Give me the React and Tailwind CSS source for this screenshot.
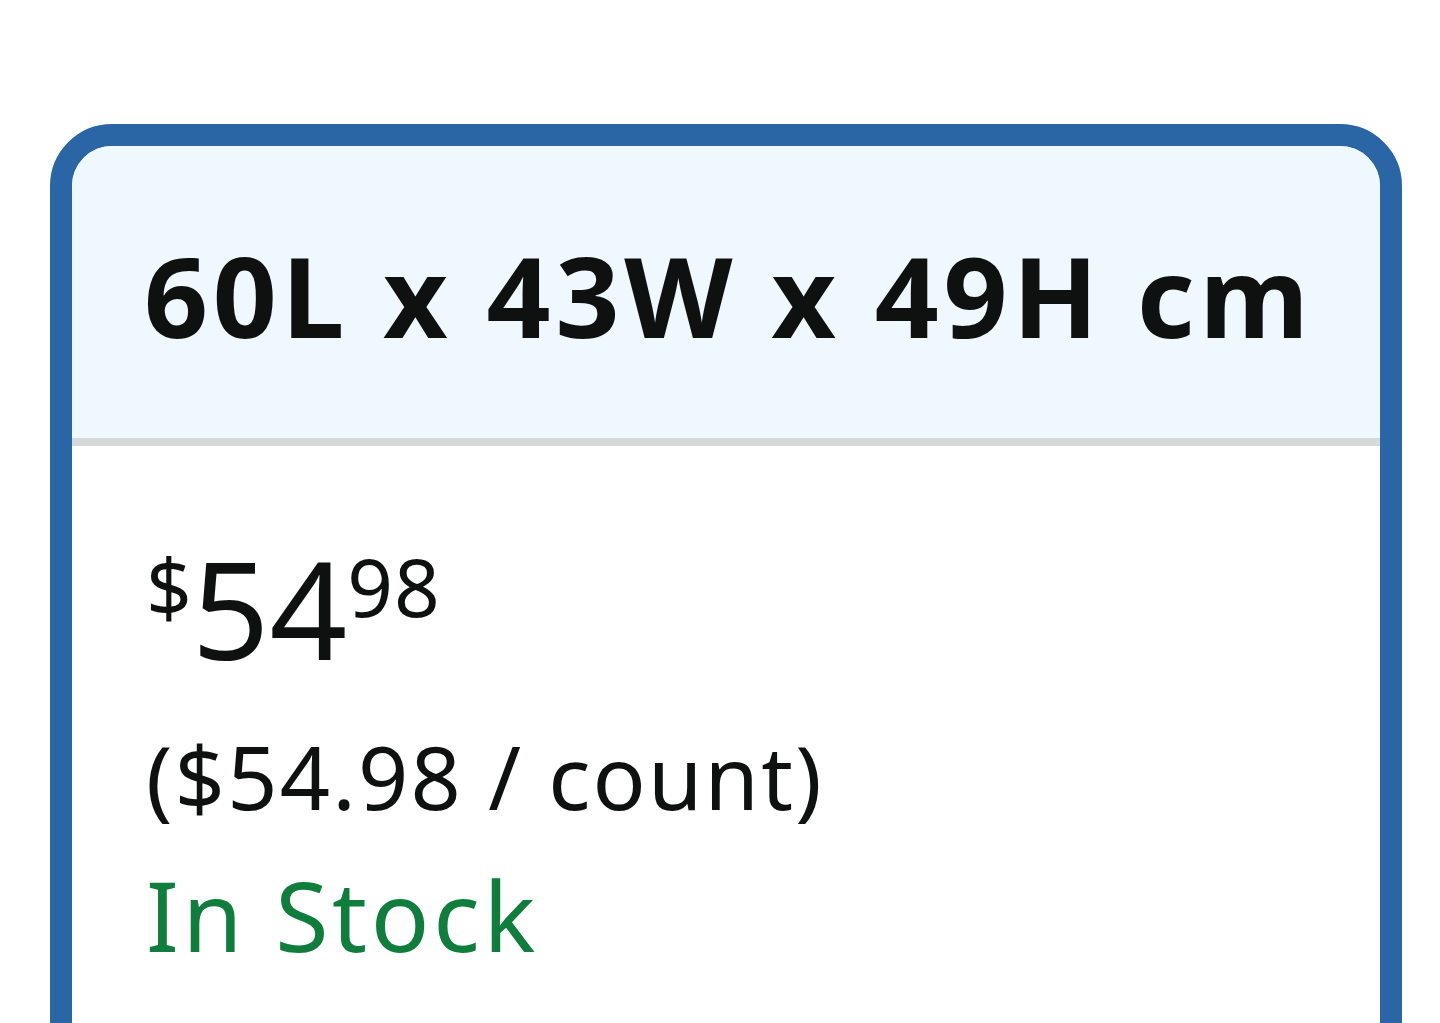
export default function App() {
  return (
    <div className="w-[1440px] h-[1023px] overflow-hidden bg-white pt-[124px] pl-[50px]" style={{ fontFamily: '"Noto Sans", "Open Sans", sans-serif' }}>
      <div className="w-[1352px] h-[1100px] rounded-[62px] border-[22px] border-[#2a65a6] overflow-hidden bg-white flex flex-col">
        <div className="h-[300px] bg-[#eff7ff] flex items-center pl-[72px] border-b-[8px] border-[#d5d9d9]">
          <span className="text-[112px] font-bold text-[#0f1111] leading-none tracking-[4.8px] mt-[6px]">60L x 43W x 49H cm</span>
        </div>
        <div className="pl-[74px] pt-[100px] flex flex-col text-[#0f1111]">
          <div className="flex items-start leading-none">
            <span className="text-[80px] mt-[0px]">$</span>
            <span className="text-[136px] leading-none -mt-[6px]">54</span>
            <span className="text-[80px] mt-[0px] tracking-[1px]">98</span>
          </div>
          <div className="text-[88px] leading-none mt-[56px] tracking-[2.2px]">($54.98 / count)</div>
          <div className="text-[97px] leading-none mt-[46px] tracking-[3.7px] text-[#0f7d3b]">In Stock</div>
        </div>
      </div>
    </div>
  );
}
